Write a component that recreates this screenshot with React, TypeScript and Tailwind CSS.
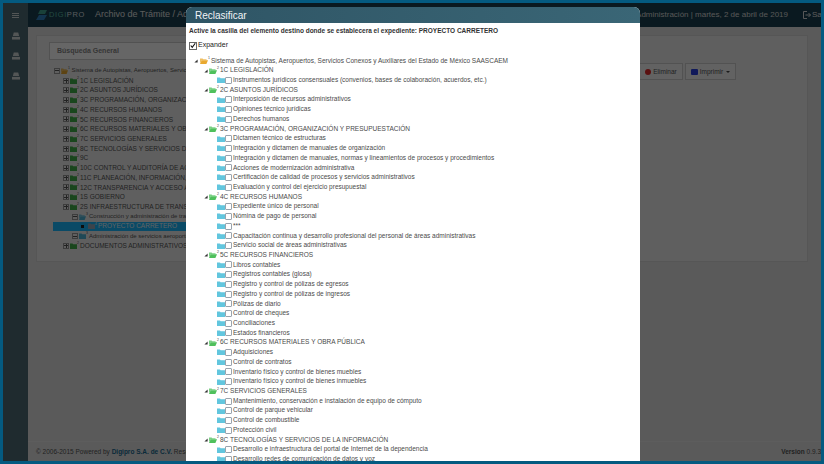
import React from "react";

const F = "font-['Liberation_Sans',Arial,sans-serif]";

function Folder({ color, open, w = 8, h = 6 }: { color: string; open?: boolean; w?: number; h?: number }) {
  return (
    <svg width={w} height={h} viewBox="0 0 11 8" preserveAspectRatio="none" className="shrink-0">
      {open ? (
        <>
          <path d="M0 0.5h3.5l1 1H9v1.5H2.5L0 7z" fill={color} opacity="0.75" />
          <path d="M2.3 3H11L8.8 8H0z" fill={color} />
        </>
      ) : (
        <path d="M0 0.5h4l1 1h6V8H0z" fill={color} />
      )}
    </svg>
  );
}

function Triangle() {
  return (
    <svg width="4" height="4" viewBox="0 0 5 5" className="shrink-0">
      <path d="M4.5 0.5V4.5H0.5z" fill="#333" />
    </svg>
  );
}

function Sup({ n }: { n: string }) {
  return <span className="text-[3.5px] leading-none -translate-y-[2px] w-[2.5px] shrink-0">{n}</span>;
}

function Plus({ minus }: { minus?: boolean }) {
  return (
    <span className="relative w-[6px] h-[6px] border border-[#999] shrink-0">
      <span className="absolute left-0 right-0 top-[1.5px] h-px bg-[#555]" />
      {!minus && <span className="absolute top-0 bottom-0 left-[1.5px] w-px bg-[#555]" />}
    </span>
  );
}

const bgTree: string[] = [
  "1C LEGISLACIÓN",
  "2C ASUNTOS JURÍDICOS",
  "3C PROGRAMACIÓN, ORGANIZACIÓN Y PRESUPUESTACIÓN",
  "4C RECURSOS HUMANOS",
  "5C RECURSOS FINANCIEROS",
  "6C RECURSOS MATERIALES Y OBRA PÚBLICA",
  "7C SERVICIOS GENERALES",
  "8C TECNOLOGÍAS Y SERVICIOS DE LA INFORMACIÓN",
  "9C",
  "10C CONTROL Y AUDITORÍA DE ACTIVIDADES",
  "11C PLANEACIÓN, INFORMACIÓN, EVALUACIÓN",
  "12C TRANSPARENCIA Y ACCESO A LA INFORMACIÓN",
  "1S GOBIERNO",
  "2S INFRAESTRUCTURA DE TRANSPORTE",
];

type Group = { t: string; items: string[] };
const groups: Group[] = [
  { t: "1C LEGISLACIÓN", items: ["Instrumentos jurídicos consensuales (convenios, bases de colaboración, acuerdos, etc.)"] },
  { t: "2C ASUNTOS JURÍDICOS", items: ["Interposición de recursos administrativos", "Opiniones técnico jurídicas", "Derechos humanos"] },
  {
    t: "3C PROGRAMACIÓN, ORGANIZACIÓN Y PRESUPUESTACIÓN",
    items: [
      "Dictamen técnico de estructuras",
      "Integración y dictamen de manuales de organización",
      "Integración y dictamen de manuales, normas y lineamientos de procesos y procedimientos",
      "Acciones de modernización administrativa",
      "Certificación de calidad de procesos y servicios administrativos",
      "Evaluación y control del ejercicio presupuestal",
    ],
  },
  {
    t: "4C RECURSOS HUMANOS",
    items: [
      "Expediente único de personal",
      "Nómina de pago de personal",
      "***",
      "Capacitación continua y desarrollo profesional del personal de áreas administrativas",
      "Servicio social de áreas administrativas",
    ],
  },
  {
    t: "5C RECURSOS FINANCIEROS",
    items: [
      "Libros contables",
      "Registros contables (glosa)",
      "Registro y control de pólizas de egresos",
      "Registro y control de pólizas de ingresos",
      "Pólizas de diario",
      "Control de cheques",
      "Conciliaciones",
      "Estados financieros",
    ],
  },
  {
    t: "6C RECURSOS MATERIALES Y OBRA PÚBLICA",
    items: [
      "Adquisiciones",
      "Control de contratos",
      "Inventario físico y control de bienes muebles",
      "Inventario físico y control de bienes inmuebles",
    ],
  },
  {
    t: "7C SERVICIOS GENERALES",
    items: [
      "Mantenimiento, conservación e instalación de equipo de cómputo",
      "Control de parque vehicular",
      "Control de combustible",
      "Protección civil",
    ],
  },
  {
    t: "8C TECNOLOGÍAS Y SERVICIOS DE LA INFORMACIÓN",
    items: [
      "Desarrollo e infraestructura del portal de Internet de la dependencia",
      "Desarrollo redes de comunicación de datos y voz",
    ],
  },
];

function BgRow({ label, indent = 0, color = "#3fae49" }: { label: string; indent?: number; color?: string }) {
  return (
    <div className="h-[9.72px] flex items-center whitespace-nowrap text-[6.5px]" style={{ paddingLeft: indent }}>
      <Plus />
      <span className="w-px" />
      <Folder color={color} w={7} />
      <Sup n="2" />
      <span className="ml-[0.5px]">{label}</span>
    </div>
  );
}

function Background() {
  return (
    <div className="absolute inset-[3px] flex">
      <aside className="w-[25px] bg-[#4e6b75] flex flex-col items-center pt-[10px] gap-[12px] shrink-0">
        <div className="flex flex-col gap-px mb-[2px]">
          <span className="w-[7px] h-px bg-[#d0d6d8]" />
          <span className="w-[7px] h-px bg-[#d0d6d8]" />
          <span className="w-[7px] h-px bg-[#d0d6d8]" />
        </div>
        {[0, 1, 2].map((i) => (
          <svg key={i} width="8" height="8" viewBox="0 0 9 8">
            <path d="M2 0h5l1 4H1z" fill="#d0d6d8" />
            <path d="M0 5h9v3H0z" fill="#d0d6d8" />
          </svg>
        ))}
      </aside>
      <div className="flex-1 flex flex-col bg-[#e2e2e2] min-w-0">
        <header className="h-[24px] bg-[#1a4050] flex items-center pl-[7px] shrink-0 text-[#e0e0e0]">
          <svg width="13" height="12" viewBox="0 0 13 12">
            <path d="M1 11l3-5h8l-3 5z" fill="#2f7fc0" />
            <path d="M3 5l2-4h7l-2 4z" fill="#3fa090" />
          </svg>
          <span className="ml-[1px] w-[33px] text-[7.5px] tracking-[0.6px] text-[#d8dee0]">
            <span className="text-[#58b8a0]">DIGI</span>PRO
          </span>
          <span className="ml-[13px] text-[9px]">Archivo de Trámite / Administración</span>
          <span className="ml-auto text-[8px] text-[#d8d8d8]">Administrador | Administración | martes, 2 de abril de 2019</span>
          <svg width="8" height="8" viewBox="0 0 8 8" className="ml-[15px] mr-[1px]" fill="none" stroke="#ddd">
            <path d="M4 .5H.5v7H4M2.5 4H7.5M5.5 2l2 2-2 2" />
          </svg>
          <span className="text-[8px] w-[9px] overflow-hidden">Salir</span>
        </header>
        <main className="flex-1 min-h-0 pt-[8px] pl-[8px] pr-[13px]">
          <div className="h-[227px] bg-[#eeeeee] border border-[#d8d8d8] pt-[6px] pl-[12px] pr-[12px] relative text-[#555]">
            <div className="h-[18px] w-[300px] border border-[#ccc] bg-white flex items-center pl-[7px] font-bold text-[#888] text-[7px]">
              Búsqueda General
            </div>
            <div className="mt-[6px] pl-[5px]">
              <div className="h-[9.72px] flex items-center whitespace-nowrap text-[6px]">
                <Plus minus />
                <span className="w-px" />
                <Folder color="#e9a92f" open w={7} />
                <Sup n="1" />
                <span className="ml-[1px]">Sistema de Autopistas, Aeropuertos, Servicios Conexos</span>
              </div>
              {bgTree.map((l) => (
                <BgRow key={l} label={l} indent={9} />
              ))}
              <div className="h-[9.72px] flex items-center whitespace-nowrap text-[6px] pl-[18px]">
                <Plus minus />
                <span className="w-px" />
                <Folder color="#4fb4d8" open w={7} />
                <Sup n="3" />
                <span className="ml-[0.5px]">Construcción y administración de transporte</span>
              </div>
              <div className="h-[9.72px] w-[150px] -ml-[1px] flex items-center whitespace-nowrap bg-[#19b9ff] text-[#eef6fa] text-[6.5px] pl-[28px]">
                <span className="w-[3px] h-[3px] bg-[#222] shrink-0" />
                <span className="w-[4px]" />
                <Folder color="#9ab" w={7} />
                <Sup n="4" />
                <span className="ml-[0.5px]">PROYECTO CARRETERO</span>
              </div>
              <div className="h-[9.72px] flex items-center whitespace-nowrap text-[6px] pl-[18px]">
                <Plus minus />
                <span className="w-px" />
                <Folder color="#4fb4d8" w={7} />
                <Sup n="3" />
                <span className="ml-[0.5px]">Administración de servicios aeroportuarios</span>
              </div>
              <BgRow label="DOCUMENTOS ADMINISTRATIVOS" indent={9} />
            </div>
            <div className="absolute top-[27px] left-[602px] flex gap-[2px] text-[6.5px] text-[#555]">
              <button className="h-[17px] w-[44px] border border-[#ccc] bg-[#f5f5f5] flex items-center justify-center gap-[2px]">
                <span className="w-[6px] h-[6px] rounded-full bg-[#e02a2a]" />Eliminar
              </button>
              <button className="h-[17px] w-[51px] border border-[#ccc] bg-[#f5f5f5] flex items-center justify-center gap-[2px]">
                <span className="w-[7px] h-[6px] rounded-[1px] bg-[#2a40e0]" />Imprimir
                <span className="border-x-[2px] border-t-[2px] border-x-transparent border-t-[#444] ml-[1px]" />
              </button>
            </div>
          </div>
        </main>
        <footer className="h-[20px] border-t border-[#e8e8e8] flex items-center justify-between pl-[8px] text-[6.5px] text-[#555] shrink-0">
          <span>
            © 2006-2015 Powered by <b className="text-[#1a6a90]">Digipro S.A. de C.V.</b> Reservados todos los derechos
          </span>
          <span>
            <b>Version</b> 0.9.3
          </span>
        </footer>
      </div>
    </div>
  );
}

function Leaf({ label }: { label: string }) {
  return (
    <div className="h-[9.72px] flex items-center pl-[31px] whitespace-nowrap">
      <Folder color="#62c6de" w={8} />
      <span className="w-[7px] h-[7px] bg-white border border-[#9aa4ae] rounded-[1px] shrink-0" />
      <span className="ml-[1px]">{label}</span>
    </div>
  );
}

function Node({ label, n, color, left, gap }: { label: string; n: string; color: string; left: number; gap: number }) {
  return (
    <div className="h-[9.72px] flex items-center whitespace-nowrap" style={{ paddingLeft: left }}>
      <Triangle />
      <span style={{ width: gap }} />
      <Folder color={color} open />
      <Sup n={n} />
      <span className="ml-[0.5px]">{label}</span>
    </div>
  );
}

export default function App() {
  return (
    <div className={`${F} relative w-[824px] h-[464px] overflow-hidden bg-[#045a80]`}>
      <div className="absolute inset-0 border-[3px] border-[#045a80] z-30 pointer-events-none" />
      <Background />
      <div className="absolute inset-0 bg-black/60 z-10" />
      <section className="absolute left-[186px] top-[7px] w-[454px] h-[460px] bg-white rounded-t-[6px] overflow-hidden z-20 text-[#4a4a4a]">
        <div className="h-[16px] bg-gradient-to-r from-[#2f5565] to-[#3a6676] text-[#f0f4f6] text-[10px] flex items-center pl-[9px]">
          Reclasificar
        </div>
        <p className="mt-[2px] pl-[3px] h-[11px] flex items-center text-[6.5px] font-bold text-[#333]">
          Active la casilla del elemento destino donde se establecera el expediente: PROYECTO CARRETERO
        </p>
        <label className="mt-[4px] pl-[3px] h-[11px] flex items-center text-[7px] text-[#222]">
          <span className="w-[8px] h-[8px] mr-px bg-white border border-[#666] flex items-center justify-center shrink-0">
            <svg width="7" height="7" viewBox="0 0 8 8" fill="none" stroke="#111" strokeWidth="1.5">
              <path d="M1 4l2 2.5L7 1" />
            </svg>
          </span>
          Expander
        </label>
        <div className="mt-[5px] text-[6.5px] leading-none">
          <Node label="Sistema de Autopistas, Aeropuertos, Servicios Conexos y Auxiliares del Estado de México SAASCAEM" n="1" color="#e9a92f" left={8} gap={2} />
          {groups.map((g) => (
            <React.Fragment key={g.t}>
              <Node label={g.t} n="2" color="#4fc05c" left={18} gap={1} />
              {g.items.map((i) => (
                <Leaf key={i} label={i} />
              ))}
            </React.Fragment>
          ))}
        </div>
      </section>
    </div>
  );
}
